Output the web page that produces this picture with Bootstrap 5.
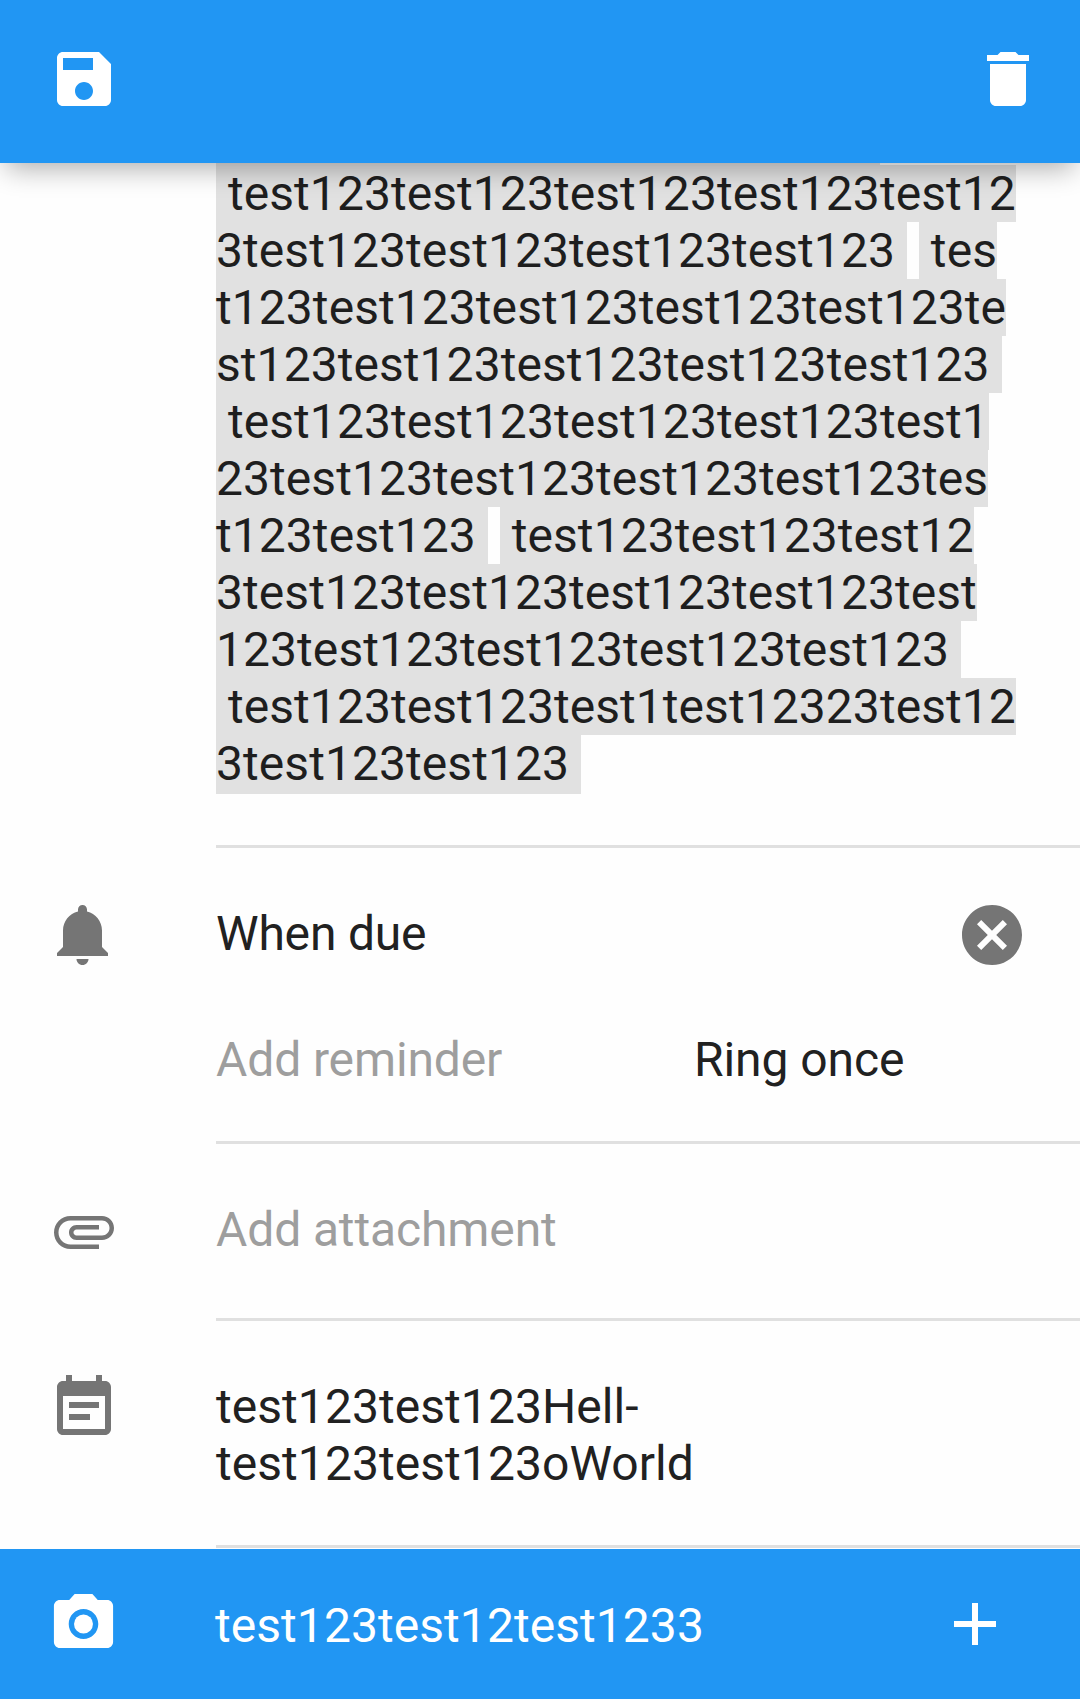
<!DOCTYPE html>
<html lang="en">
<head>
<meta charset="utf-8">
<meta name="viewport" content="width=device-width, initial-scale=1">
<title>Edit task</title>
<link href="https://cdn.jsdelivr.net/npm/bootstrap@5.3.0/dist/css/bootstrap.min.css" rel="stylesheet">
<style>
  body { font-family: Roboto, "Noto Sans", sans-serif; font-size: 48px; line-height: 57px; letter-spacing: .06px; color: #212121; background: #fefefe; }
  .task-screen { width: 1080px; height: 1699px; }
  .app-bar { height: 163px; padding: 43px 36px 0 48px; background: #2196f3; z-index: 2; box-shadow: 0 11px 26px -6px rgba(0,0,0,.33); }
  .icon-btn { width: 72px; height: 72px; padding: 0; border: 0; background: none; color: #fff; line-height: 0; }
  .icon-btn svg, .icon-cell svg { width: 72px; height: 72px; fill: currentColor; display: block; }
  .grey-icon { color: #757575; }
  .icon-cell { width: 168px; color: #757575; }
  .field-row { padding-left: 48px; }
  .field-body { border-bottom: 3px solid #e0e0e0; }
  .field-row.note-field { height: 685px; }
  .field-row.reminder-field { height: 296px; }
  .field-row.attach-field { height: 177px; }
  .field-row.calendar-field { height: 227px; }
  .field-pad { padding-top: 51px; }
  .text-top { padding-top: 6px; }
  .note-line { white-space: pre; height: 57px; }
  .note-line span { background: #e1e1e1; color: #1e1e1e; }
  .note-line:last-child span { padding-bottom: 2px; }
  .line-tail { width: 664px; height: 2px; background: #e1e1e1; }
  .hint-text { color: #9e9e9e; letter-spacing: -.12px; }
  .due-text { letter-spacing: -.2px; }
  .reminder-top { height: 126px; padding-right: 52px; }
  .ring-mode { width: 386px; letter-spacing: -.08px; }
  .bottom-bar { height: 150px; margin-top: 1px; padding: 39px 69px 0 48px; background: #2196f3; color: #fff; }
  .bottom-title { padding: 9px 0 0 95px; }
  .icon-btn .camera-icon { width: 71px; }
</style>
<script src="https://cdn.jsdelivr.net/npm/bootstrap@5.3.0/dist/js/bootstrap.bundle.min.js"></script>
</head>
<body>
<div class="task-screen d-flex flex-column overflow-hidden">
  <header class="app-bar d-flex justify-content-between align-items-start position-relative flex-shrink-0">
    <button class="icon-btn" type="button" aria-label="Save"><svg viewBox="0 0 24 24"><path d="M17 3H5c-1.110 0-2 .9-2 2v14c0 1.100.89 2 2 2h14c1.100 0 2-.9 2-2V7l-4-4zm-5 16c-1.660 0-3-1.340-3-3s1.340-3 3-3 3 1.340 3 3-1.340 3-3 3zm3-10H5V5h10v4z"/></svg></button>
    <button class="icon-btn" type="button" aria-label="Delete"><svg viewBox="0 0 24 24"><path d="M6 19c0 1.100.9 2 2 2h8c1.100 0 2-.9 2-2V7H6v12zM19 4h-3.500l-1-1h-5l-1 1H5v2h14V4z"/></svg></button>
  </header>

  <main class="flex-shrink-0">
    <section class="field-row note-field d-flex">
      <div class="icon-cell flex-shrink-0"></div>
      <div class="field-body flex-grow-1">
        <div class="line-tail"></div>
        <div class="note-line"><span> test123test123test123test123test12</span></div>
        <div class="note-line"><span>3test123test123test123test123 </span> <span> tes</span></div>
        <div class="note-line"><span>t123test123test123test123test123te</span></div>
        <div class="note-line"><span>st123test123test123test123test123 </span></div>
        <div class="note-line"><span> test123test123test123test123test1</span></div>
        <div class="note-line"><span>23test123test123test123test123tes</span></div>
        <div class="note-line"><span>t123test123 </span> <span> test123test123test12</span></div>
        <div class="note-line"><span>3test123test123test123test123test</span></div>
        <div class="note-line"><span>123test123test123test123test123 </span></div>
        <div class="note-line"><span> test123test123test1test12323test12</span></div>
        <div class="note-line"><span>3test123test123 </span></div>
      </div>
    </section>

    <section class="field-row reminder-field d-flex">
      <div class="icon-cell field-pad flex-shrink-0"><svg viewBox="0 0 24 24"><path d="M11.500 22c1.100 0 2-.9 2-2h-4c0 1.100.9 2 2 2zm6.500-6v-5.500c0-3.070-2.130-5.640-5-6.320V3.500c0-.83-.67-1.500-1.500-1.500S10 2.670 10 3.500v.68c-2.870.68-5 3.250-5 6.320V16l-2 2v1h17v-1l-2-2z"/></svg></div>
      <div class="field-body field-pad flex-grow-1">
        <div class="reminder-top d-flex justify-content-between align-items-start">
          <div class="text-top due-text">When due</div>
          <button class="icon-btn grey-icon" type="button" aria-label="Remove reminder"><svg viewBox="0 0 24 24"><path d="M12 2C6.470 2 2 6.470 2 12s4.470 10 10 10 10-4.470 10-10S17.530 2 12 2zm5 13.590L15.590 17 12 13.410 8.410 17 7 15.590 10.590 12 7 8.410 8.410 7 12 10.590 15.590 7 17 8.410 13.410 12 17 15.590z"/></svg></button>
        </div>
        <div class="d-flex justify-content-between text-top">
          <div class="hint-text">Add reminder</div>
          <div class="ring-mode">Ring once</div>
        </div>
      </div>
    </section>

    <section class="field-row attach-field d-flex">
      <div class="icon-cell field-pad flex-shrink-0"><svg viewBox="0 0 24 24"><path d="M7.500 18C4.460 18 2 15.540 2 12.500S4.460 7 7.500 7H18c2.210 0 4 1.790 4 4s-1.790 4-4 4H9.500C8.120 15 7 13.880 7 12.500S8.120 10 9.500 10H17v1.500H9.500c-.55 0-1 .45-1 1s.45 1 1 1H18c1.380 0 2.500-1.120 2.500-2.500S19.380 8.500 18 8.500H7.500c-2.210 0-4 1.790-4 4s1.790 4 4 4H17V18H7.500z"/></svg></div>
      <div class="field-body field-pad flex-grow-1"><div class="text-top hint-text">Add attachment</div></div>
    </section>

    <section class="field-row calendar-field d-flex">
      <div class="icon-cell field-pad flex-shrink-0"><svg viewBox="0 0 24 24"><path d="M17 10H7v2h10v-2zm2-7h-1V1h-2v2H8V1H6v2H5c-1.110 0-2 .9-2 2v14c0 1.100.89 2 2 2h14c1.100 0 2-.9 2-2V5c0-1.100-.9-2-2-2zm0 16H5V8h14v11zm-5-5H7v2h7v-2z"/></svg></div>
      <div class="field-body field-pad flex-grow-1"><div class="text-top">test123test123Hell-<br>test123test123oWorld</div></div>
    </section>
  </main>

  <footer class="bottom-bar d-flex align-items-start flex-shrink-0">
    <button class="icon-btn" type="button" aria-label="Camera"><svg class="camera-icon" viewBox="0 0 24 24" preserveAspectRatio="none"><circle cx="12" cy="12" r="3.200"/><path d="M9 2L7.170 4H4c-1.100 0-2 .9-2 2v12c0 1.100.9 2 2 2h16c1.100 0 2-.9 2-2V6c0-1.100-.9-2-2-2h-3.170L15 2H9zm3 15c-2.760 0-5-2.240-5-5s2.240-5 5-5 5 2.240 5 5-2.240 5-5 5z"/></svg></button>
    <div class="bottom-title flex-grow-1">test123test12test1233</div>
    <button class="icon-btn" type="button" aria-label="Add"><svg viewBox="0 0 24 24"><path d="M19 13h-6v6h-2v-6H5v-2h6V5h2v6h6v2z"/></svg></button>
  </footer>
</div>
</body>
</html>
